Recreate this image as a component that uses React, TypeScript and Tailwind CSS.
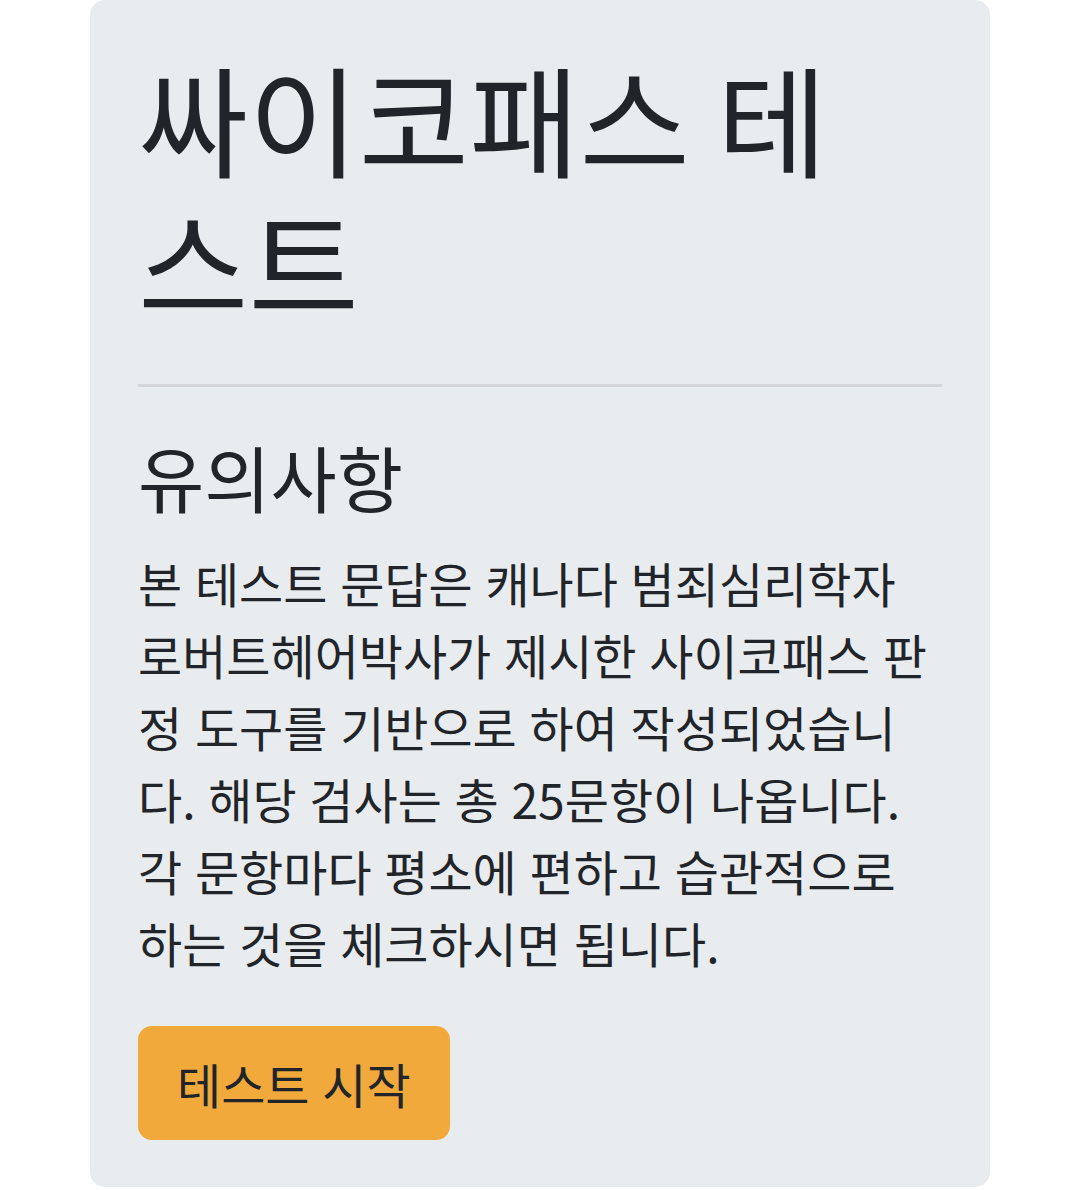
import React from "react";

export default function App() {
  return (
    <div className="min-h-screen bg-white font-['Noto_Sans_CJK_KR',sans-serif] text-[#212529]">
      <div className="mx-[90px] rounded-[15px] bg-[#e9ecef] px-[48px] pt-[45px] pb-[47px]">
        <h1 className="pr-[20px] text-[120px] font-normal leading-[144px]">싸이코패스 테스트</h1>
        <hr className="mt-[51px] border-0 border-t-[3px] border-solid border-[#d3d5d9]" />
        <h4 className="mt-[46px] text-[72px] font-normal leading-[86px]">유의사항</h4>
        <p className="mt-[27px] text-[48px] leading-[72px] [word-spacing:2px]">
          본 테스트 문답은 캐나다 범죄심리학자 로버트헤어박사가 제시한 사이코패스 판정 도구를 기반으로 하여 작성되었습니다. 해당 검사는 총 25문항이 나옵니다. 각 문항마다 평소에 편하고 습관적으로 하는 것을 체크하시면 됩니다.
        </p>
        <button
          type="button"
          className="mt-[48px] rounded-[14px] bg-[#f1a93b] px-[39px] py-[21px] text-[48px] leading-[72px] text-[#212529] [word-spacing:2px]"
        >
          테스트 시작
        </button>
      </div>
    </div>
  );
}
